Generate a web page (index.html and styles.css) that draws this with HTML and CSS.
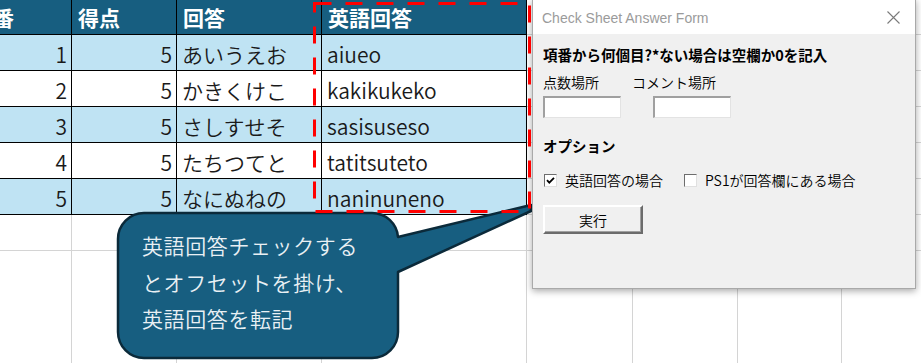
FILE: index.html
```html
<!DOCTYPE html>
<html lang="ja">
<head>
<meta charset="utf-8">
<title>Check Sheet</title>
<link rel="stylesheet" href="styles.css">
</head>
<body>
<div class="sheet">
  <div class="c t h">項番</div><div class="c t h">得点</div><div class="c t h">回答</div><div class="c t h">英語回答</div><div class="c"></div><div class="c"></div><div class="c"></div><div class="c"></div>

  <div class="c t b n">1</div><div class="c t b n">5</div><div class="c t b">あいうえお</div><div class="c t b">aiueo</div><div class="c"></div><div class="c"></div><div class="c"></div><div class="c"></div>

  <div class="c t n">2</div><div class="c t n">5</div><div class="c t">かきくけこ</div><div class="c t">kakikukeko</div><div class="c"></div><div class="c"></div><div class="c"></div><div class="c"></div>

  <div class="c t b n">3</div><div class="c t b n">5</div><div class="c t b">さしすせそ</div><div class="c t b">sasisuseso</div><div class="c"></div><div class="c"></div><div class="c"></div><div class="c"></div>

  <div class="c t n">4</div><div class="c t n">5</div><div class="c t">たちつてと</div><div class="c t">tatitsuteto</div><div class="c"></div><div class="c"></div><div class="c"></div><div class="c"></div>

  <div class="c t b n">5</div><div class="c t b n">5</div><div class="c t b">なにぬねの</div><div class="c t b">naninuneno</div><div class="c"></div><div class="c"></div><div class="c"></div><div class="c"></div>

  <div class="c"></div><div class="c"></div><div class="c"></div><div class="c"></div><div class="c"></div><div class="c"></div><div class="c"></div><div class="c"></div>

  <div class="c"></div><div class="c"></div><div class="c"></div><div class="c"></div><div class="c"></div><div class="c"></div><div class="c"></div><div class="c"></div>
</div>

<svg class="callout-shape" width="921" height="363" viewBox="0 0 921 363">
  <path d="M144 213 H372 A26 26 0 0 1 398 237 L531 205 L531 211 L398 272 V332 A26 26 0 0 1 372 358 H144 A26 26 0 0 1 118 332 V239 A26 26 0 0 1 144 213 Z" fill="#175e80" stroke="#0b2a3a" stroke-width="2.5" stroke-linejoin="round"/>
</svg>
<div class="callout-text">英語回答チェックする<br>とオフセットを掛け、<br>英語回答を転記</div>

<div class="dialog">
  <div class="titlebar">
    <span class="title">Check Sheet Answer Form</span>
    <svg class="close" width="13" height="13" viewBox="0 0 13 13"><path d="M0.5 0.5 L12.5 12.5 M12.5 0.5 L0.5 12.5" stroke="#7a7a7a" stroke-width="1.1" fill="none"/></svg>
  </div>
  <div class="client">
    <div class="heading">項番から何個目?*ない場合は空欄か0を記入</div>
    <div class="labels">
      <span class="lbl first">点数場所</span>
      <span class="lbl">コメント場所</span>
    </div>
    <div class="inputs">
      <div class="input"></div>
      <div class="input"></div>
    </div>
    <div class="heading opt">オプション</div>
    <div class="checks">
      <div class="check first"><span class="box"><svg width="11" height="11" viewBox="0 0 11 11"><path d="M2 5.2 L4.3 7.6 L9 2.8" stroke="#000" stroke-width="1.8" fill="none"/></svg></span><span>英語回答の場合</span></div>
      <div class="check"><span class="box"></span><span>PS1が回答欄にある場合</span></div>
    </div>
    <div class="btn">実行</div>
  </div>
</div>

<svg class="marker" width="921" height="363" viewBox="0 0 921 363">
  <rect x="314.5" y="3.5" width="215" height="208" fill="none" stroke="#ff0000" stroke-width="3" stroke-dasharray="17 14"/>
</svg>
</body>
</html>
```

FILE: styles.css
```css
* { box-sizing: border-box; }

html, body {
  margin: 0;
  padding: 0;
  width: 921px;
  height: 363px;
  overflow: hidden;
  background: #ffffff;
  font-family: "Noto Sans CJK JP", "Noto Sans", sans-serif;
}

body { position: relative; }

.sheet {
  display: grid;
  grid-template-columns: 106px 105px 145px 205px 106px 105px 104px 105px;
  grid-template-rows: 35px repeat(6, 36px) 120px;
  margin-left: -34px;
  width: 981px;
}

.c {
  border-right: 1px solid #d4d4d4;
  border-bottom: 1px solid #d4d4d4;
  display: flex;
  align-items: center;
  padding: 2px 5px 0 5px;
  font-size: 21px;
  font-weight: 350;
  color: #1a1a1a;
  white-space: nowrap;
  overflow: hidden;
}

.t { border-color: #000000; }

.h {
  background: #175e80;
  color: #ffffff;
  font-weight: 700;
  padding-left: 6px;
  padding-top: 0;
}

.b { background: #bfe3f3; }

.n {
  justify-content: flex-end;
  padding-right: 4px;
}

.callout-shape {
  position: absolute;
  left: 0;
  top: 0;
}

.callout-text {
  position: absolute;
  left: 142px;
  top: 227px;
  font-size: 21px;
  font-weight: 350;
  letter-spacing: 0.6px;
  line-height: 36.5px;
  color: #e9f0f4;
  white-space: nowrap;
}

.dialog {
  position: absolute;
  left: 532px;
  top: -1px;
  width: 384px;
  height: 290px;
  background: #f0f0f0;
  border: 1px solid #a9a9a9;
  box-shadow: 0 2px 7px rgba(0, 0, 0, 0.35);
}

.titlebar {
  height: 34px;
  background: #ffffff;
  display: flex;
  align-items: center;
  justify-content: space-between;
  padding: 0 15px 0 9px;
}

.title {
  font-family: "Liberation Sans", Arial, sans-serif;
  font-size: 14px;
  color: #9b9b9b;
  padding-top: 1px;
}

.client {
  padding: 0 10px;
  font-size: 14px;
  font-weight: 350;
  color: #000000;
}

.heading {
  font-weight: 700;
  font-size: 14.5px;
  line-height: 20px;
  margin-top: 11px;
  white-space: nowrap;
}

.labels {
  display: flex;
  margin-top: 8px;
  line-height: 18px;
}

.lbl.first { width: 89px; }

.inputs {
  display: flex;
  gap: 32px;
  margin-top: 5px;
}

.input {
  width: 78px;
  height: 22px;
  background: #ffffff;
  border-top: 2px solid #a0a0a0;
  border-left: 2px solid #a0a0a0;
  border-right: 1px solid #e3e3e3;
  border-bottom: 1px solid #e3e3e3;
}

.heading.opt { margin-top: 18px; }

.checks {
  display: flex;
  align-items: center;
  margin-top: 15px;
  line-height: 18px;
  padding-left: 1px;
}

.check {
  display: flex;
  align-items: center;
  gap: 8px;
  white-space: nowrap;
}

.check.first { width: 140px; }

.box {
  width: 13px;
  height: 13px;
  background: #ffffff;
  border-top: 1px solid #6d6d6d;
  border-left: 1px solid #6d6d6d;
  border-right: 1px solid #e0e0e0;
  border-bottom: 1px solid #e0e0e0;
  display: flex;
  align-items: center;
  justify-content: center;
}

.btn {
  margin-top: 16px;
  width: 100px;
  height: 29px;
  background: #f0f0f0;
  border-top: 2px solid #ffffff;
  border-left: 2px solid #ffffff;
  border-right: 2px solid #6b6b6b;
  border-bottom: 2px solid #6b6b6b;
  box-shadow: inset -1px -1px 0 #a0a0a0;
  display: flex;
  align-items: center;
  justify-content: center;
  font-size: 14px;
}

.marker {
  position: absolute;
  left: 0;
  top: 0;
}
```
